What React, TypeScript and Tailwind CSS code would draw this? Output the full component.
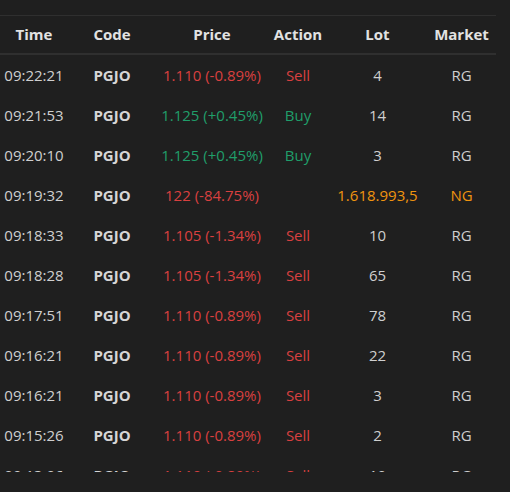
const rows = [
  { time: '09:22:21', price: '1.110 (-0.89%)', action: 'Sell', lot: '4', market: 'RG', tone: 'down' },
  { time: '09:21:53', price: '1.125 (+0.45%)', action: 'Buy', lot: '14', market: 'RG', tone: 'up' },
  { time: '09:20:10', price: '1.125 (+0.45%)', action: 'Buy', lot: '3', market: 'RG', tone: 'up' },
  { time: '09:19:32', price: '122 (-84.75%)', action: '', lot: '1.618.993,5', market: 'NG', tone: 'nego' },
  { time: '09:18:33', price: '1.105 (-1.34%)', action: 'Sell', lot: '10', market: 'RG', tone: 'down' },
  { time: '09:18:28', price: '1.105 (-1.34%)', action: 'Sell', lot: '65', market: 'RG', tone: 'down' },
  { time: '09:17:51', price: '1.110 (-0.89%)', action: 'Sell', lot: '78', market: 'RG', tone: 'down' },
  { time: '09:16:21', price: '1.110 (-0.89%)', action: 'Sell', lot: '22', market: 'RG', tone: 'down' },
  { time: '09:16:21', price: '1.110 (-0.89%)', action: 'Sell', lot: '3', market: 'RG', tone: 'down' },
  { time: '09:15:26', price: '1.110 (-0.89%)', action: 'Sell', lot: '2', market: 'RG', tone: 'down' },
  { time: '09:13:06', price: '1.110 (-0.89%)', action: 'Sell', lot: '10', market: 'RG', tone: 'down' },
];

const cols = 'grid grid-cols-[68px_88px_112px_60px_99px_69px] items-center text-center';

export default function App() {
  return (
    <div className="h-[492px] w-[510px] bg-[#1f1f1f] pt-[15px] font-['Open_Sans',sans-serif] text-[15px]">
      <div className="w-[496px]">
        <div className={`${cols} h-[40px] border-t border-b-2 border-t-[#2f2f2f] border-b-[#2f2f2f] font-bold text-[#e2e2e2]`}>
          <div>Time</div>
          <div>Code</div>
          <div>Price</div>
          <div>Action</div>
          <div>Lot</div>
          <div>Market</div>
        </div>
        <div className="h-[417px] overflow-hidden">
          {rows.map((r, i) => (
            <div key={i} className={`${cols} h-[40px]`}>
              <div className="text-[#cfcfcf]">{r.time}</div>
              <div className="font-bold text-[#d6d6d6]">PGJO</div>
              <div className={r.tone === 'up' ? 'text-[#1f9e6a]' : 'text-[#d9403f]'}>{r.price}</div>
              <div className={r.tone === 'up' ? 'text-[#1f9e6a]' : 'text-[#d9403f]'}>{r.action}</div>
              <div className={r.tone === 'nego' ? 'text-[#f0940f]' : 'text-[#cfcfcf]'}>{r.lot}</div>
              <div className={r.tone === 'nego' ? 'text-[#f0940f]' : 'text-[#cfcfcf]'}>{r.market}</div>
            </div>
          ))}
        </div>
      </div>
    </div>
  );
}
